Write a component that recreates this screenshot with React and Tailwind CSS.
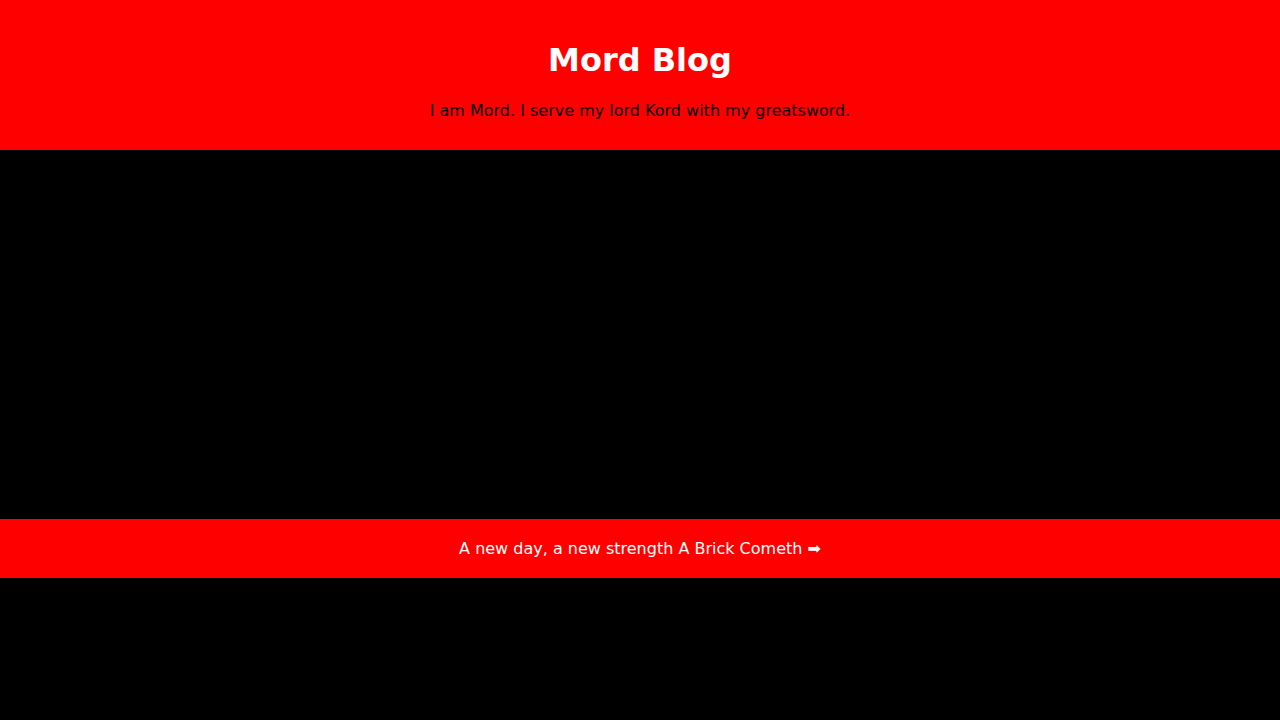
export default function App() {
  return (
    <div className="min-h-[720px] bg-black" style={{ fontFamily: '"DejaVu Sans", sans-serif' }}>
      <header className="bg-[#ff0000] h-[150px] pt-[41px] text-center">
        <h1 className="text-[32px] leading-[38px] font-bold text-white">Mord Blog</h1>
        <p className="mt-[22px] text-[16px] leading-[19px] text-black">I am Mord. I serve my lord Kord with my greatsword.</p>
      </header>
      <main className="h-[369px] bg-black"></main>
      <footer className="bg-[#ff0000] h-[59px] flex items-center justify-center text-[16px] text-white">
        <span>A new day, a new strength A Brick Cometh ➡</span>
      </footer>
    </div>
  );
}
